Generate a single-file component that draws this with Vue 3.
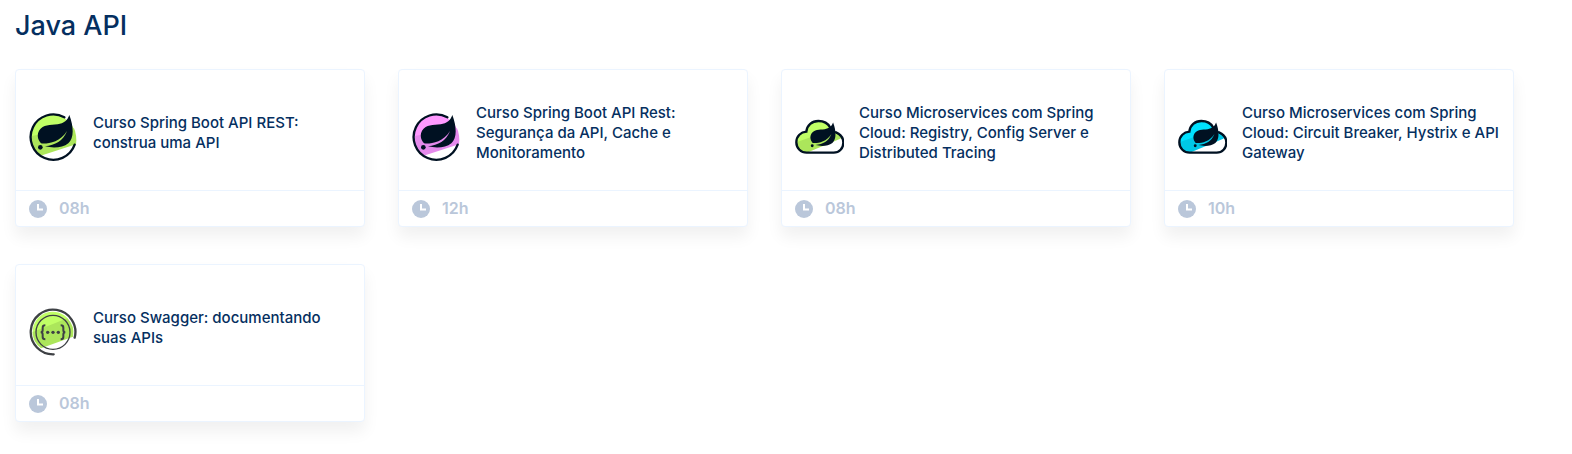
<script setup>
const courses = [
  { title: 'Curso Spring Boot API REST: construa uma API', hours: '08h', icon: 'spring', tone: 'lime' },
  { title: 'Curso Spring Boot API Rest: Segurança da API, Cache e Monitoramento', hours: '12h', icon: 'spring', tone: 'pink' },
  { title: 'Curso Microservices com Spring Cloud: Registry, Config Server e Distributed Tracing', hours: '08h', icon: 'cloud', tone: 'lime' },
  { title: 'Curso Microservices com Spring Cloud: Circuit Breaker, Hystrix e API Gateway', hours: '10h', icon: 'cloud', tone: 'cyan' },
  { title: 'Curso Swagger: documentando suas APIs', hours: '08h', icon: 'swagger', tone: 'lime' },
]
</script>

<template>
  <main class="page">
    <h1 class="heading">Java API</h1>
    <ul class="grid">
      <li v-for="course in courses" :key="course.title">
        <a class="card" href="#">
          <span class="body">
            <svg class="logo" :class="course.tone" viewBox="0 0 150 150" aria-hidden="true">
              <g v-if="course.icon === 'spring'">
                <path class="light" d="M7 75A67 67 0 0 1 108 17L130 35L142 60L7 90Z" />
                <path class="shade" d="M7 73L138 49Q148 74 144 97L38 131Q7 111 7 73Z" />
                <path class="ring" d="M109 16A68 68 0 1 0 140 98" />
                <g>
                  <path class="ink" d="M124 9C119 24 108 34 89 37C66 39 45 38 34 55C26 68 29 83 39 94C53 96 95 94 117 57C105 88 82 99 51 103C74 109 104 108 121 94C139 78 137 43 124 9Z" />
                  <circle class="ink" cx="37" cy="106" r="7" />
                </g>
              </g>
              <g v-else-if="course.icon === 'cloud'">
                <path class="light" d="M7 91C7 70 21 60 37 59C39 39 54 27 73 27C90 27 102 34 108 46L126 59L142 74L7 99Z" />
                <path class="shade" d="M7 91L100 58L143 75L139 80L42 121Q8 121 7 91Z" />
                <path class="ring" d="M108 46C102 34 90 27 73 27C54 27 39 39 37 59C21 60 7 72 7 91C7 109 21 122 38 122H119C136 122 148 109 148 92C148 77 140 67 126 61" />
                <g transform="translate(28 25) scale(.72)">
                  <path class="ink" d="M124 9C119 24 108 34 89 37C66 39 45 38 34 55C26 68 29 83 39 94C53 96 95 94 117 57C105 88 82 99 51 103C74 109 104 108 121 94C139 78 137 43 124 9Z" />
                  <circle class="ink" cx="37" cy="106" r="6" />
                </g>
              </g>
              <g v-else>
                <path class="light" d="M14 75A60 60 0 0 1 122 38L14 85Z" />
                <path class="shade" d="M14 75L118 34A61 61 0 0 1 135 89L39 124Q14 105 14 75Z" />
                <path class="ring slate" d="M77 142A67 67 0 1 1 140 92" />
                <circle class="thin" cx="75" cy="76" r="51" />
                <path class="brace" d="M52 55Q44 55 44 62V69Q44 76 38 76Q44 76 44 83V90Q44 97 52 97M98 55Q106 55 106 62V69Q106 76 112 76Q106 76 106 83V90Q106 97 98 97" />
                <circle class="dot" cx="59" cy="76" r="5" />
                <circle class="dot" cx="75" cy="76" r="5" />
                <circle class="dot" cx="91" cy="76" r="5" />
              </g>
            </svg>
            <span class="title">{{ course.title }}</span>
          </span>
          <span class="footer">
            <svg class="clock" viewBox="0 0 18 18" aria-hidden="true">
              <circle cx="9" cy="9" r="9" />
              <path d="M9 4V9.500H14" />
            </svg>
            <span>{{ course.hours }}</span>
          </span>
        </a>
      </li>
    </ul>
  </main>
</template>

<style>
body {
  margin: 0;
  background: #fff;
}
</style>

<style scoped>
.page {
  padding: 8px 58px 32px 15px;
  font-family: Inter, "Liberation Sans", sans-serif;
  color: #052f60;
}
.heading {
  margin: 0 0 25px;
  font-size: 27px;
  line-height: 36px;
  font-weight: 500;
}
.grid {
  display: grid;
  grid-template-columns: repeat(4, 1fr);
  gap: 37px 33px;
  margin: 0;
  padding: 0;
  list-style: none;
}
.card {
  display: block;
  border: 1px solid #ebf4ff;
  border-radius: 4px;
  background: #fff;
  box-shadow: 0 10px 16px rgba(0, 0, 0, 0.06);
  color: inherit;
  text-decoration: none;
}
.body {
  display: flex;
  align-items: center;
  gap: 15px;
  min-height: 104px;
  padding: 15px 12px 1px;
}
.logo {
  flex: none;
  width: 50px;
  height: 50px;
}
.title {
  font-size: 15px;
  line-height: 20px;
  font-weight: 450;
  padding-bottom: 8px;
}
.footer {
  display: flex;
  align-items: center;
  gap: 12px;
  height: 35px;
  padding: 0 13px;
  border-top: 1px solid #ebf4ff;
  color: #bac7da;
  font-size: 16px;
  line-height: 20px;
  font-weight: 600;
}
.footer span {
  padding-bottom: 2px;
}
.clock {
  width: 18px;
  height: 18px;
}
.clock circle {
  fill: #bac7da;
}
.clock path {
  fill: none;
  stroke: #fff;
  stroke-width: 2;
}
.lime {
  --light: #c0ff66;
  --shade: #ace65b;
}
.pink {
  --light: #ff99ff;
  --shade: #e58aec;
}
.cyan {
  --light: #00e1ff;
  --shade: #00c8e6;
}
.light {
  fill: var(--light);
}
.shade {
  fill: var(--shade);
}
.ink {
  fill: #001122;
}
.ring {
  fill: none;
  stroke: #001122;
  stroke-width: 7;
  stroke-linecap: round;
}
.ring.slate {
  stroke: #3e4145;
}
.thin {
  fill: none;
  stroke: #3e4145;
  stroke-width: 4;
}
.brace {
  fill: none;
  stroke: #3e4145;
  stroke-width: 6;
}
.dot {
  fill: #3e4145;
}
</style>
